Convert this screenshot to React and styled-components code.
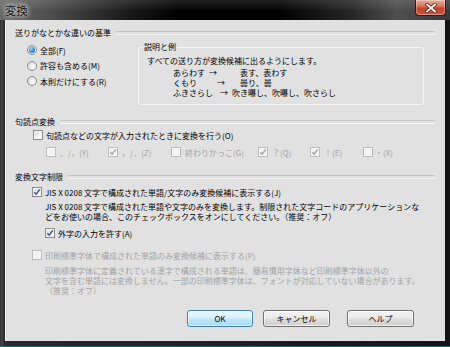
import React from 'react';
import styled, { createGlobalStyle } from 'styled-components';

const Global = createGlobalStyle`
  html, body { margin: 0; padding: 0; background: #0e6c7e; }
  body {
    width: 450px; height: 347px; overflow: hidden;
    font-family: "Noto Sans CJK JP", "Noto Sans", sans-serif;
  }
  * { box-sizing: border-box; }
`;

const Win = styled.div`
  width: 450px;
  height: 346px;
  display: flex;
  flex-direction: column;
  background: linear-gradient(90deg, #2e2e2e 0, #4a4a4a 2px, #2a2a2a 4px, #202020 50%, #141414 100%);
`;

const TitleBar = styled.div`
  height: 20px;
  flex: none;
  display: flex;
  align-items: flex-start;
  padding-left: 5px;
  background:
    linear-gradient(180deg, rgba(255,255,255,0.12) 0, rgba(255,255,255,0.04) 45%, rgba(0,0,0,0) 55%),
    linear-gradient(90deg, #6a6a6a 0%, #4a4a4a 12%, #1a1a1a 28%, #000 40%, #000 62%, #262626 78%, #4e4e4e 88%, #3a3a3a 100%);
`;

const Title = styled.div`
  font-size: 11px;
  line-height: 20px;
  color: #111;
  text-shadow: 0 0 4px rgba(255,255,255,0.95), 0 0 7px rgba(255,255,255,0.7);
  letter-spacing: 0.5px;
`;

const CloseBtn = styled.div`
  margin-left: auto;
  margin-right: 4px;
  width: 31px;
  height: 16px;
  border: 1px solid #3d1610;
  border-top: none;
  border-radius: 0 0 4px 4px;
  background: linear-gradient(180deg, #e9a89b 0%, #d9785f 40%, #c2442a 55%, #c8553a 100%);
  box-shadow: inset 0 0 0 1px rgba(255,255,255,0.35);
  display: flex;
  align-items: center;
  justify-content: center;
`;

const Body = styled.div`
  flex: 1;
  display: flex;
  padding: 0 5px 5px 5px;
`;

const Client = styled.div`
  flex: 1;
  display: flex;
  flex-direction: column;
  background: #e1e1e1;
  border-left: 1px solid #f2f2f2;
  padding: 7px 10px 0 9px;
  font-size: 8px;
  color: #000;
`;

const Header = styled.div`
  height: 12px;
  display: flex;
  align-items: center;
  line-height: 12px;
  margin-top: ${p => p.$mt || 0}px;
  white-space: nowrap;
  &::after {
    content: '';
    flex: 1;
    margin-left: 5px;
    height: 2px;
    border-top: 1px solid #c4c4c4;
    border-bottom: 1px solid #f7f7f7;
  }
`;

const Group1 = styled.div`
  display: flex;
  align-items: flex-start;
`;

const RadioCol = styled.div`
  width: 111px;
  margin-left: 12px;
  padding-top: 3.5px;
  display: flex;
  flex-direction: column;
`;

const RadioRow = styled.div`
  height: 15.5px;
  display: flex;
  align-items: center;
  white-space: nowrap;
`;

const Radio = styled.span`
  width: 10px;
  height: 10px;
  flex: none;
  margin-right: 3px;
  border-radius: 50%;
  border: 1px solid #8b8b8b;
  background: radial-gradient(circle at 65% 65%, #ffffff 0%, #eeeeee 40%, #cfcfcf 100%);
  display: flex;
  align-items: center;
  justify-content: center;
  &::after {
    content: '';
    display: ${p => (p.$on ? 'block' : 'none')};
    width: 6px;
    height: 6px;
    border-radius: 50%;
    background: radial-gradient(circle at 35% 35%, #a8dcff 0%, #3f8fd6 45%, #154f94 100%);
  }
`;

const Box = styled.fieldset`
  margin: 2px 0 0 0;
  padding: 0 0 6px 8px;
  width: 286px;
  border: 1px solid #f6f6f6;
  border-radius: 3px;
  min-inline-size: 0;
`;

const Legend = styled.legend`
  margin-left: -4px;
  padding: 0 1px;
  font-size: 8px;
  line-height: 12px;
`;

const BoxLine = styled.div`
  line-height: 10px;
  padding-top: 3px;
  white-space: nowrap;
`;

const Examples = styled.div`
  margin-top: 2px;
  margin-left: 26px;
  display: flex;
  flex-direction: column;
`;

const ExRow = styled.div`
  height: 10px;
  line-height: 10px;
  display: flex;
  white-space: nowrap;
`;

const ExCell = styled.span`
  width: ${p => p.$w}px;
  flex: none;
`;

const Row = styled.div`
  height: 12px;
  display: flex;
  align-items: center;
  margin-top: ${p => p.$mt || 0}px;
  margin-left: ${p => p.$indent || 0}px;
  white-space: nowrap;
  color: ${p => (p.$disabled ? '#a3a3a3' : '#000')};
`;

const Item = styled.div`
  width: ${p => p.$w}px;
  flex: none;
  display: flex;
  align-items: center;
`;

const Check = styled.span`
  width: 10px;
  height: 10px;
  flex: none;
  margin-right: ${p => (p.$gap == null ? 3 : p.$gap)}px;
  border: 1px solid ${p => (p.$disabled ? '#bcbcbc' : '#8b8b8b')};
  background: ${p => (p.$disabled
    ? '#f3f3f3'
    : 'linear-gradient(135deg, #d3d6da 0%, #eceef0 50%, #ffffff 100%)')};
  box-shadow: inset 0 0 0 1px ${p => (p.$disabled ? '#f7f7f7' : '#f4f4f4')};
  display: flex;
  align-items: center;
  justify-content: center;
`;

const Desc = styled.div`
  margin-top: ${p => p.$mt || 0}px;
  margin-left: 30px;
  line-height: 10px;
  white-space: nowrap;
  color: ${p => (p.$disabled ? '#a3a3a3' : '#000')};
`;

const Buttons = styled.div`
  margin-top: 14px;
  display: flex;
  justify-content: flex-end;
  padding-right: 21px;
`;

const Btn = styled.div`
  width: ${p => p.$w}px;
  height: 17px;
  margin-left: ${p => p.$ml || 0}px;
  border: 1px solid ${p => (p.$default ? '#3c7fb1' : '#707070')};
  border-radius: 3px;
  background: ${p => (p.$default
    ? 'linear-gradient(180deg, #eaf6fd 0%, #d9f0fc 45%, #bee6fd 55%, #a7d9f5 100%)'
    : 'linear-gradient(180deg, #f2f2f2 0%, #ebebeb 45%, #dddddd 55%, #cfcfcf 100%)')};
  box-shadow: inset 0 0 0 1px ${p => (p.$default ? 'rgba(255,255,255,0.6)' : 'rgba(255,255,255,0.7)')};
  display: flex;
  align-items: center;
  justify-content: center;
  font-size: 8px;
  color: #000;
`;

const CheckMark = ({ disabled }) => (
  <svg width="8" height="8" viewBox="0 0 8 8">
    <path d="M1.3 4.2 L3.1 6.2 L6.8 1.4" fill="none"
      stroke={disabled ? '#a5a5a5' : '#3a4f8c'} strokeWidth="1.5" />
  </svg>
);

const CB = ({ on, disabled, gap }) => (
  <Check $disabled={disabled} $gap={gap}>{on && <CheckMark disabled={disabled} />}</Check>
);

export default function App() {
  return (
    <>
      <Global />
      <Win>
        <TitleBar>
          <Title>変換</Title>
          <CloseBtn>
            <svg width="12" height="10" viewBox="0 0 12 10">
              <path d="M2 1.5 L10 8.5 M10 1.5 L2 8.5" stroke="#5a2418" strokeWidth="3.4" strokeLinecap="square" />
              <path d="M2 1.5 L10 8.5 M10 1.5 L2 8.5" stroke="#ffffff" strokeWidth="1.8" strokeLinecap="square" />
            </svg>
          </CloseBtn>
        </TitleBar>
        <Body>
          <Client>
            <Header>送りがなとかな違いの基準</Header>
            <Group1>
              <RadioCol>
                <RadioRow><Radio $on />全部(F)</RadioRow>
                <RadioRow><Radio />許容も含める(M)</RadioRow>
                <RadioRow><Radio />本則だけにする(R)</RadioRow>
              </RadioCol>
              <Box>
                <Legend>説明と例</Legend>
                <BoxLine>すべての送り方が変換候補に出るようにします。</BoxLine>
                <Examples>
                  <ExRow><ExCell $w={36}>あらわす</ExCell><ExCell $w={31}>→</ExCell><span>表す、表わす</span></ExRow>
                  <ExRow><ExCell $w={44}>くもり</ExCell><ExCell $w={23}>→</ExCell><span>曇り、曇</span></ExRow>
                  <ExRow><ExCell $w={47}>ふきさらし</ExCell><ExCell $w={12}>→</ExCell><span>吹き曝し、吹曝し、吹さらし</span></ExRow>
                </Examples>
              </Box>
            </Group1>

            <Header $mt={11}>句読点変換</Header>
            <Row $mt={1} $indent={18}><CB />句読点などの文字が入力されたときに変換を行う(O)</Row>
            <Row $mt={5} $indent={31} $disabled>
              <Item $w={62}><CB disabled gap={4} />、/，(Y)</Item>
              <Item $w={63}><CB disabled on gap={4} />。/．(Z)</Item>
              <Item $w={87}><CB disabled gap={4} />終わりかっこ(G)</Item>
              <Item $w={52}><CB disabled on gap={4} />？(Q)</Item>
              <Item $w={53}><CB disabled on gap={4} />！(E)</Item>
              <Item $w={40}><CB disabled gap={2} />・(X)</Item>
            </Row>

            <Header $mt={13}>変換文字制限</Header>
            <Row $mt={3} $indent={17}><CB on />JIS X 0208 文字で構成された単語/文字のみ変換候補に表示する(J)</Row>
            <Desc $mt={4}>
              JIS X 0208 文字で構成された単語や文字のみを変換します。制限された文字コードのアプリケーションな<br />
              どをお使いの場合、このチェックボックスをオンにしてください。（推奨：オフ）
            </Desc>
            <Row $mt={5} $indent={30}><CB on />外字の入力を許す(A)</Row>

            <Row $mt={10} $indent={17} $disabled><CB disabled />印刷標準字体で構成された単語のみ変換候補に表示する(P)</Row>
            <Desc $mt={5} $disabled>
              印刷標準字体に定義されている漢字で構成される単語は、簡易慣用字体など印刷標準字体以外の<br />
              文字を含む単語には変換しません。一部の印刷標準字体は、フォントが対応していない場合があります。<br />
              （推奨：オフ）
            </Desc>

            <Buttons>
              <Btn $w={66} $default>OK</Btn>
              <Btn $w={67} $ml={10}>キャンセル</Btn>
              <Btn $w={67} $ml={17}>ヘルプ</Btn>
            </Buttons>
          </Client>
        </Body>
      </Win>
    </>
  );
}
